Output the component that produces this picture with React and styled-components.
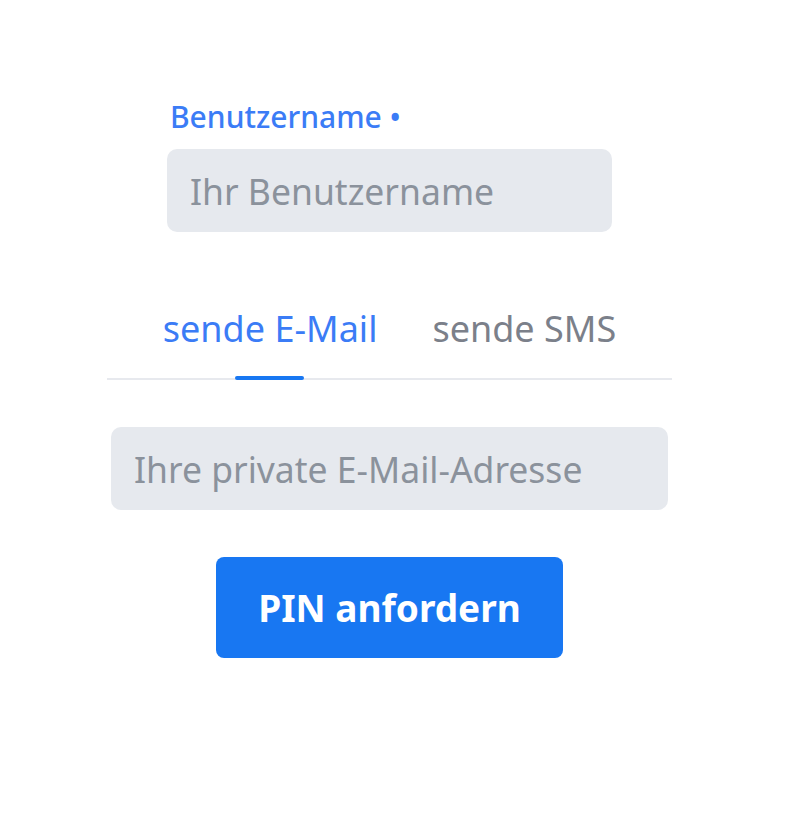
import styled, { createGlobalStyle } from "styled-components";

const GlobalStyle = createGlobalStyle`
  body {
    margin: 0;
    background: #ffffff;
    font-family: "Noto Sans", "Open Sans", sans-serif;
  }
`

const Page = styled.div`
  width: 565px;
  padding: 96px 0 0 107px;
  display: flex;
  flex-direction: column;
  align-items: center;
`

const Field = styled.div`
  display: flex;
  flex-direction: column;
  width: 445px;
  gap: 12px;
`

const Label = styled.label`
  font-size: 30px;
  line-height: 41px;
  font-weight: 500;
  color: #3b7cf6;
  padding-left: 3px;
`

const Input = styled.input`
  box-sizing: border-box;
  width: ${(p) => p.$width}px;
  height: 83px;
  border: none;
  border-radius: 10px;
  background: #e6e9ee;
  padding: 0 23px;
  font-family: inherit;
  font-size: 35.5px;
  color: #333;
  caret-color: #222;
  outline: none;

  &::placeholder {
    color: #8b929c;
  }
`

const Tabs = styled.div`
  width: 565px;
  margin-top: 72px;
  display: flex;
  justify-content: center;
  gap: 55px;
  border-bottom: 2px solid #e7e9ee;
`

const Tab = styled.button`
  position: relative;
  background: none;
  border: none;
  padding: 0 0 25px;
  font-family: inherit;
  font-size: 36px;
  line-height: 49px;
  color: ${(p) => (p.$active ? "#3b7cf6" : "#7b808a")};
  cursor: pointer;

  &::after {
    content: "";
    display: ${(p) => (p.$active ? "block" : "none")};
    position: absolute;
    left: 50%;
    bottom: -2px;
    width: 69px;
    height: 4px;
    margin-left: -35px;
    border-radius: 2px;
    background: #1877f2;
  }
`

const EmailRow = styled.div`
  margin-top: 47px;
`

const Button = styled.button`
  margin-top: 47px;
  width: 347px;
  height: 101px;
  border: none;
  border-radius: 8px;
  background: #1877f2;
  color: #ffffff;
  font-family: inherit;
  font-size: 37px;
  font-weight: 700;
  cursor: pointer;
`

export default function App() {
  return (
    <>
      <GlobalStyle />
      <Page>
        <Field>
          <Label>Benutzername •</Label>
          <Input $width={445} placeholder="Ihr Benutzername" autoFocus />
        </Field>
        <Tabs>
          <Tab $active>sende E-Mail</Tab>
          <Tab>sende SMS</Tab>
        </Tabs>
        <EmailRow>
          <Input $width={557} placeholder="Ihre private E-Mail-Adresse" />
        </EmailRow>
        <Button>PIN anfordern</Button>
      </Page>
    </>
  )
}
